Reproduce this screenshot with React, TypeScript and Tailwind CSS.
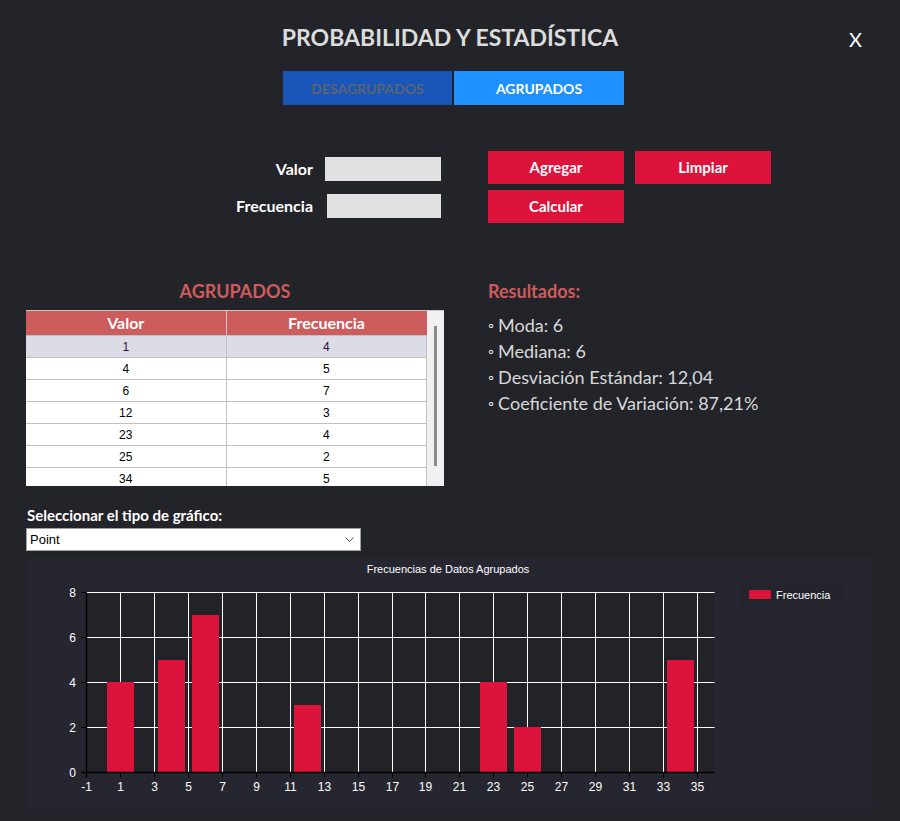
import React from "react";

const rows: [number, number][] = [
  [1, 4],
  [4, 5],
  [6, 7],
  [12, 3],
  [23, 4],
  [25, 2],
  [34, 5],
];

const resultados = [
  "Moda: 6",
  "Mediana: 6",
  "Desviación Estándar: 12,04",
  "Coeficiente de Variación: 87,21%",
];

// chart mapping, panel coords
const PL = 60.5;
const PR = 688.5;
const PT = 34.5;
const PB = 214.5;
const ux = (PR - PL) / 37;
const sx = (v: number) => Math.round(PL + (v + 1) * ux - 0.5) + 0.5;
const sy = (v: number) => Math.round(PB - v * 22.5 - 0.5) + 0.5;

function Chart() {
  const xTicks = Array.from({ length: 19 }, (_, i) => -1 + i * 2);
  const yTicks = [0, 2, 4, 6, 8];
  return (
    <svg width={846} height={251} className="block" style={{ fontFamily: "'Liberation Sans', Arial, sans-serif" }}>
      <rect x={PL} y={PT} width={PR - PL} height={PB - PT} fill="#222229" />
      <rect x={714} y={25} width={105} height={24} fill="#24242c" />
      <text x={422} y={15} fill="#ffffff" fontSize={11} textAnchor="middle">
        Frecuencias de Datos Agrupados
      </text>
      {/* grid */}
      {xTicks.slice(1).map((t) => (
        <line key={"gx" + t} x1={sx(t)} x2={sx(t)} y1={PT} y2={PB} stroke="#ffffff" strokeWidth={1} />
      ))}
      {yTicks.slice(1).map((t) => (
        <line key={"gy" + t} x1={PL} x2={PR} y1={sy(t)} y2={sy(t)} stroke="#ffffff" strokeWidth={1} />
      ))}
      {/* bars */}
      {rows.map(([v, f]) => (
        <rect key={"b" + v} x={sx(v) - 13.5} y={sy(f) - 0.5} width={27} height={PB - sy(f) + 0.5} fill="#dc143c" />
      ))}
      {/* axes */}
      <line x1={PL} x2={PL} y1={PT} y2={PB + 5} stroke="#000000" strokeWidth={1.5} />
      <line x1={PL - 5} x2={PR} y1={PB} y2={PB} stroke="#000000" strokeWidth={1.5} />
      {yTicks.map((t) => (
        <g key={"yt" + t}>
          <line x1={PL - 5} x2={PL} y1={sy(t)} y2={sy(t)} stroke="#000000" />
          <text x={50} y={sy(t) + 4.5} fill="#ffffff" fontSize={12} textAnchor="end">
            {t}
          </text>
        </g>
      ))}
      {xTicks.map((t) => (
        <g key={"xt" + t}>
          <line x1={sx(t)} x2={sx(t)} y1={PB} y2={PB + 5} stroke="#000000" />
          <text x={sx(t)} y={233} fill="#ffffff" fontSize={12} textAnchor="middle">
            {t}
          </text>
        </g>
      ))}
      {/* legend */}
      <rect x={723} y={32} width={22} height={9} fill="#dc143c" />
      <text x={750} y={41} fill="#ffffff" fontSize={11}>
        Frecuencia
      </text>
    </svg>
  );
}

export default function App() {
  return (
    <div
      className="relative w-[900px] h-[821px] bg-[#232429] text-white overflow-hidden"
      style={{ fontFamily: "Lato, 'Noto Sans', sans-serif" }}
    >
      {/* Header */}
      <header className="pt-[23px] flex justify-center">
        <h1 className="text-[23px] font-bold text-[#dcdcdc] leading-[28px]">PROBABILIDAD Y ESTADÍSTICA</h1>
      </header>
      <button className="absolute top-[27px] left-[849px] text-[20px] leading-[24px] text-white">X</button>

      {/* Tabs */}
      <div className="mt-[20px] flex justify-center gap-[2px] pl-[7px]">
        <button className="w-[169px] h-[34px] bg-[#1a56b8] text-[14px] font-bold text-[#5b6374]">DESAGRUPADOS</button>
        <button className="w-[170px] h-[34px] bg-[#1e90ff] text-[14px] font-bold text-white">AGRUPADOS</button>
      </div>

      {/* Form */}
      <div className="mt-[46px] flex pl-[235px]">
        <div className="flex flex-col gap-[13px] pt-[6px]">
          <div className="flex items-center h-[24px]">
            <label className="w-[78px] text-right text-[16px] font-bold">Valor</label>
            <input className="ml-[12px] w-[116px] h-[24px] bg-[#e1e1e1] outline-none" />
          </div>
          <div className="flex items-center h-[24px]">
            <label className="w-[78px] text-right text-[16px] font-bold">Frecuencia</label>
            <input className="ml-[14px] w-[114px] h-[24px] bg-[#e1e1e1] outline-none" />
          </div>
        </div>
        <div className="ml-[47px] flex flex-col gap-[6px]">
          <div className="flex gap-[11px]">
            <button className="w-[136px] h-[33px] bg-[#dc143c] text-[15px] font-bold">Agregar</button>
            <button className="w-[136px] h-[33px] bg-[#dc143c] text-[15px] font-bold">Limpiar</button>
          </div>
          <button className="w-[136px] h-[33px] bg-[#dc143c] text-[15px] font-bold">Calcular</button>
        </div>
      </div>

      {/* Table + results */}
      <div className="mt-[57px] flex pl-[26px]">
        <section className="w-[418px]">
          <h2 className="text-center text-[18px] font-bold text-[#cd5c5c] leading-[22px]">AGRUPADOS</h2>
          <div className="mt-[8px] h-[176px] flex bg-white border-t border-[#c8c8c8] overflow-hidden">
            <table
              className="w-[401px] border-collapse text-[12px] text-black"
              style={{ fontFamily: "'Liberation Sans', Arial, sans-serif" }}
            >
              <thead>
                <tr className="h-[23px] bg-[#cd5c5c] text-white" style={{ fontFamily: "Lato, sans-serif" }}>
                  <th className="w-[200px] border-r border-[#c8c8c8] text-[16px] font-bold">Valor</th>
                  <th className="text-[16px] font-bold">Frecuencia</th>
                </tr>
              </thead>
              <tbody>
                {rows.map(([v, f], i) => (
                  <tr
                    key={v}
                    className={
                      i === 0
                        ? "h-[22px] bg-[#dcdce6] text-[#3a0a3a] border-t border-[#c0c0c0]"
                        : "h-[22px] border-t border-[#c0c0c0]"
                    }
                  >
                    <td className="text-center border-r border-[#c0c0c0]">{v}</td>
                    <td className="text-center border-r border-[#c0c0c0]">{f}</td>
                  </tr>
                ))}
              </tbody>
            </table>
            <div className="w-[17px] bg-[#f0f0f0] flex justify-center pt-[15px]">
              <div className="w-[3px] h-[140px] bg-[#8a8a8a]" />
            </div>
          </div>
        </section>
        <section className="ml-[44px]">
          <h2 className="text-[18px] font-bold text-[#cd5c5c] leading-[22px]">Resultados:</h2>
          <ul className="mt-[10px] flex flex-col text-[18px] text-[#d8d8d8] leading-[26px]">
            {resultados.map((r) => (
              <li key={r} className="flex items-center gap-[4px]">
                <span className="text-[15px] text-white">◦</span>
                {r}
              </li>
            ))}
          </ul>
        </section>
      </div>

      {/* Select */}
      <div className="mt-[19px] pl-[27px]">
        <label className="block text-[15px] font-bold leading-[20px]">Seleccionar el tipo de gráfico:</label>
        <div
          className="mt-[3px] w-[335px] h-[23px] bg-white border border-[#a0a0a0] flex items-center justify-between pl-[3px] pr-[6px] text-black text-[13px] -ml-[1px]"
          style={{ fontFamily: "'Liberation Sans', Arial, sans-serif" }}
        >
          <span>Point</span>
          <svg width="9" height="6" viewBox="0 0 9 6">
            <path d="M0.5 0.5 L4.5 4.5 L8.5 0.5" fill="none" stroke="#555" strokeWidth="1" />
          </svg>
        </div>
      </div>

      {/* Chart */}
      <div className="mt-[7px] ml-[26px] w-[846px] h-[251px] bg-[#262631]">
        <Chart />
      </div>
    </div>
  );
}
